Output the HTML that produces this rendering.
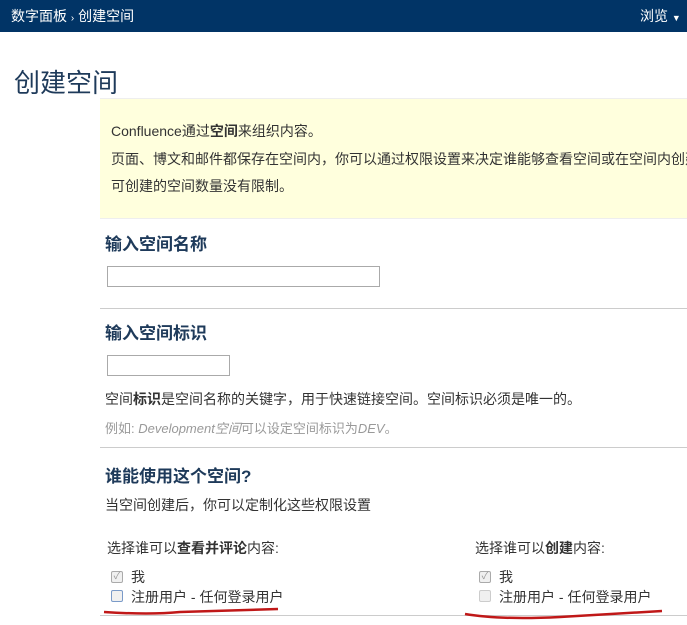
<!DOCTYPE html>
<html><head><meta charset="utf-8"><style>
*{margin:0;padding:0;box-sizing:border-box}
body{width:687px;height:625px;overflow:hidden;background:#fff;font-family:"Liberation Sans","Noto Sans CJK SC",sans-serif;color:#333;font-size:14px;position:relative}
.a{position:absolute;white-space:nowrap}
.hdr{position:absolute;left:0;top:0;width:687px;height:32px;background:#013466;color:#fff;font-size:14px}
h1{position:absolute;left:14px;top:63px;font-size:26px;font-weight:normal;color:#1e3a5a}
.info{position:absolute;left:100px;top:98px;width:600px;height:121px;background:#ffffdd;border-top:1px solid #eee;border-bottom:1px solid #eee}
h2{position:absolute;font-size:17px;font-weight:bold;color:#1e3a5a;left:105px}
.inp{position:absolute;border:1px solid #aaa;height:21px;background:#fff}
.sep{position:absolute;left:100px;width:587px;height:1px;background:#ccc}
.cb{position:absolute;width:12px;height:12px;border:1px solid #aaa;border-radius:2px;background:#f0f0f0}
</style></head><body>
<div class="hdr"><span class="a" style="left:11px;top:6px">数字面板 <span style="font-size:10px">›</span> 创建空间</span><span class="a" style="left:640px;top:6px">浏览 <span style="font-size:9px">▼</span></span></div>
<h1>创建空间</h1>
<div class="info">
<span class="a" style="left:11px;top:22px">Confluence通过<b>空间</b>来组织内容。</span>
<span class="a" style="left:11px;top:50px">页面、博文和邮件都保存在空间内，你可以通过权限设置来决定谁能够查看空间或在空间内创建</span>
<span class="a" style="left:11px;top:77px">可创建的空间数量没有限制。</span>
</div>
<h2 style="top:230px">输入空间名称</h2>
<div class="inp" style="left:107px;top:266px;width:273px"></div>
<div class="sep" style="top:308px"></div>
<h2 style="top:319px">输入空间标识</h2>
<div class="inp" style="left:107px;top:355px;width:123px"></div>
<span class="a" style="left:105px;top:389px">空间<b>标识</b>是空间名称的关键字，用于快速链接空间。空间标识必须是唯一的。</span>
<span class="a" style="left:105px;top:418px;font-size:13px;color:#999">例如: <i>Development空间</i>可以设定空间标识为<i>DEV</i>。</span>
<div class="sep" style="top:447px"></div>
<h2 style="top:462px">谁能使用这个空间?</h2>
<span class="a" style="left:105px;top:495px">当空间创建后，你可以定制化这些权限设置</span>
<span class="a" style="left:107px;top:538px">选择谁可以<b>查看并评论</b>内容:</span>
<span class="a" style="left:475px;top:538px">选择谁可以<b>创建</b>内容:</span>
<div class="cb" style="left:111px;top:571px;color:#999;font-size:10px;line-height:10px;text-align:center">✓</div><span class="a" style="left:131px;top:567px">我</span>
<div class="cb" style="left:111px;top:590px;border-color:#7a9ac8"></div><span class="a" style="left:131px;top:587px">注册用户 - 任何登录用户</span>
<div class="cb" style="left:479px;top:571px;color:#999;font-size:10px;line-height:10px;text-align:center">✓</div><span class="a" style="left:499px;top:567px">我</span>
<div class="cb" style="left:479px;top:590px;border-color:#ccc"></div><span class="a" style="left:499px;top:587px">注册用户 - 任何登录用户</span>
<div class="sep" style="top:615px"></div>
<svg class="a" style="left:0;top:0" width="687" height="625"><path d="M104 612 Q150 615 180 612 L278 609" stroke="#c01818" stroke-width="2.5" fill="none"/><path d="M465 614 Q500 620 560 617 L662 611" stroke="#c01818" stroke-width="2.5" fill="none"/></svg>
</body></html>
